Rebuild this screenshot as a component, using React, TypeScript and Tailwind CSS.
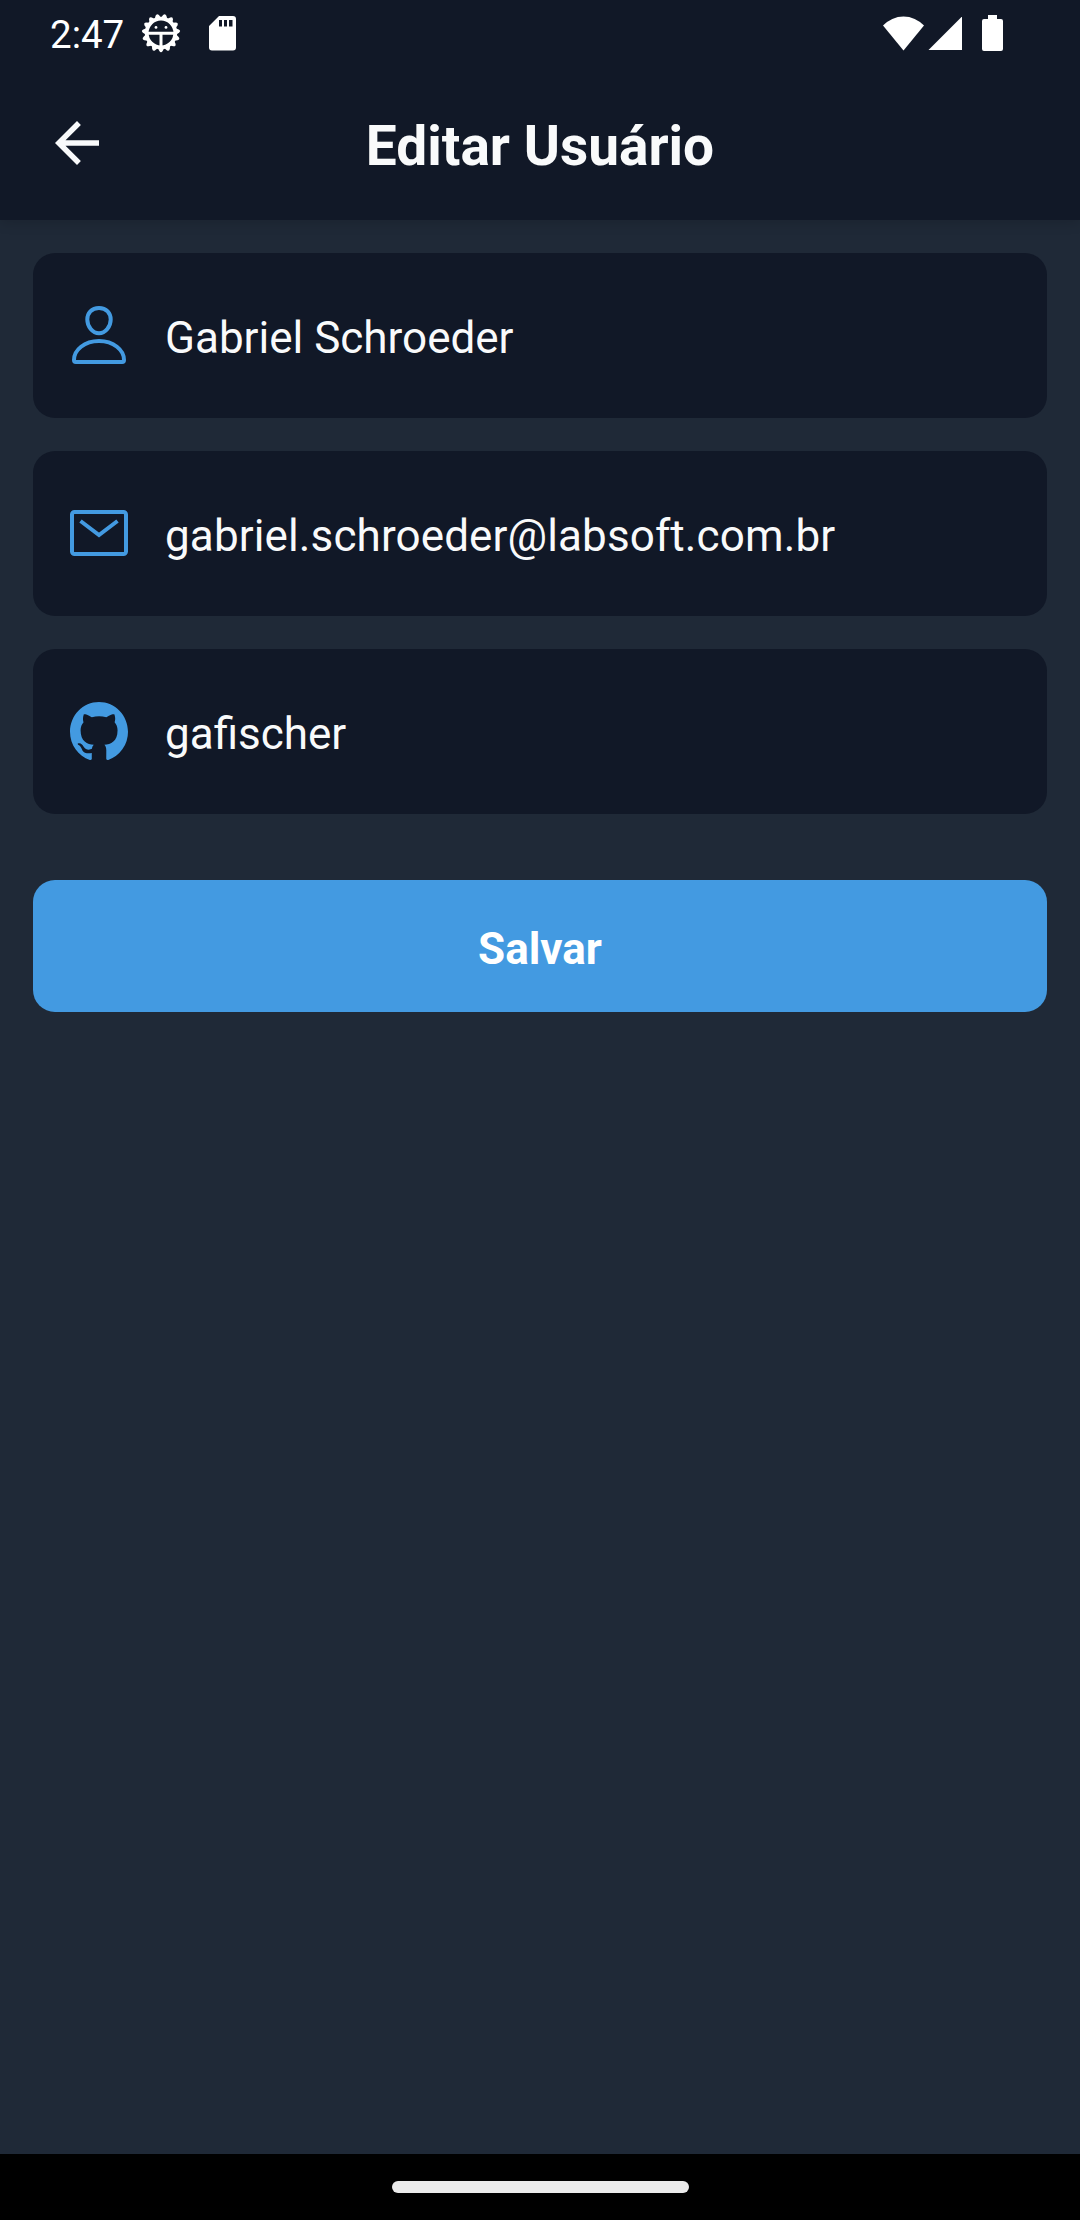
import React from "react";

const TEETH = Array.from({ length: 15 }, (_, i) => i * 24);

function GearIcon() {
  return (
    <svg className="ml-[17px] size-[40px]" viewBox="-20 -20 40 40">
      <circle r="14.3" fill="none" stroke="#fff" strokeWidth="3.8" />
      {TEETH.map((a) => (
        <path key={a} d="M-3.2 15 L-1.7 18 Q0 20.400 1.7 18 L3.2 15Z" fill="#fff" transform={`rotate(${a})`} />
      ))}
      <path d="M-13 .3H13M0 .3V14" stroke="#fff" strokeWidth="3" />
      <circle cx="-5" cy="-5.6" r="1.4" fill="#fff" />
      <circle cx="5" cy="-5.6" r="1.4" fill="#fff" />
    </svg>
  );
}

function SdCardIcon() {
  return (
    <svg className="ml-[28px] h-[35px] w-[27px]" viewBox="0 0 27 35" fill="#fff">
      <path fillRule="evenodd" d="M10 0H24Q27 0 27 3V31.500Q27 34.500 24 34.500H3Q0 34.500 0 31.500V10ZM10 4V10.500H13V4ZM15 4V10.500H18V4ZM20 4V10.500H23.500V4Z" />
    </svg>
  );
}

function StatusBar() {
  return (
    <div className="flex h-[66px] items-center pr-[77px] pl-[50px]">
      <span className="mt-[2px] text-[38.5px] leading-[45px] text-white">2:47</span>
      <GearIcon />
      <SdCardIcon />
      <div className="ml-auto flex items-center">
        <svg className="h-[35px] w-[41px]" viewBox="0 0 41 35" fill="#fff">
          <path d="M0 9.500A28 28 0 0 1 41 9.500L20.500 34.500Z" />
        </svg>
        <svg className="ml-[4px] size-[34.500px]" viewBox="0 0 34.500 34.500" fill="#fff">
          <path d="M34.500 0V34.500H0Z" />
        </svg>
        <svg className="ml-[20px] h-[36px] w-[21px]" viewBox="0 0 21 36" fill="#fff">
          <path d="M6 0H15V4H19Q21 4 21 6V34Q21 36 19 36H2Q0 36 0 34V6Q0 4 2 4H6Z" />
        </svg>
      </div>
    </div>
  );
}

function PersonIcon() {
  return (
    <svg className="size-[58px]" viewBox="0 0 58 58" fill="none" stroke="#439ae1" strokeWidth="4">
      <path d="M29 2C36.500 2 40.700 7.200 40.700 13.500C40.700 20.500 35.500 27.300 29 27.300S17.300 20.500 17.300 13.500C17.300 7.200 21.500 2 29 2Z" />
      <path d="M5.800 56C4.800 56 4 55.300 4 54C4 44 14.500 35.100 29 35.100S54 44 54 54C54 55.300 53.200 56 52.200 56Z" />
    </svg>
  );
}

function MailIcon() {
  return (
    <svg className="size-[58px]" viewBox="0 0 58 58" fill="none" stroke="#439ae1" strokeWidth="4">
      <rect x="2" y="8" width="54" height="42" rx="2.500" />
      <path d="M10.500 17L29 31L47.500 17" />
    </svg>
  );
}

function GithubIcon() {
  return (
    <svg className="size-[58px]" viewBox="0 0 16 15.600" preserveAspectRatio="none" fill="#439ae1">
      <path d="M8 0C3.58 0 0 3.58 0 8c0 3.54 2.29 6.53 5.47 7.59.4.07.55-.17.55-.38 0-.19-.01-.82-.01-1.49-2.01.37-2.53-.49-2.69-.94-.09-.23-.48-.94-.82-1.13-.28-.15-.68-.52-.01-.53.63-.01 1.08.58 1.23.82.72 1.21 1.87.87 2.33.66.07-.52.28-.87.51-1.07-1.78-.2-3.64-.89-3.64-3.95 0-.87.31-1.59.82-2.15-.08-.2-.36-1.02.08-2.12 0 0 .67-.21 2.2.82.64-.18 1.32-.27 2-.27s1.36.09 2 .27c1.53-1.04 2.2-.82 2.2-.82.44 1.1.16 1.92.08 2.12.51.56.82 1.27.82 2.15 0 3.07-1.87 3.75-3.65 3.95.29.25.54.73.54 1.48 0 1.07-.01 1.93-.01 2.2 0 .21.15.46.55.38A8.01 8.01 0 0 0 16 8c0-4.420-3.580-8-8-8Z" />
    </svg>
  );
}

function Field({ icon, value, wide = false }: { icon: React.ReactNode; value: string; wide?: boolean }) {
  return (
    <div className="flex h-[165px] items-center rounded-[22px] bg-[#111827] pl-[37px]">
      <div className="-mt-[1px]">{icon}</div>
      <span
        className={`mt-[5px] ml-[37px] text-[44px] leading-[52px] text-[#f9fafb] ${wide ? "tracking-[0.12px]" : ""}`}
      >
        {value}
      </span>
    </div>
  );
}

export default function App() {
  return (
    <div className="flex h-[2220px] w-[1080px] flex-col bg-[#1f2937] font-['Roboto',sans-serif]">
      <header className="h-[220px] bg-[#111827] shadow-[0_3px_12px_rgba(0,0,0,0.14)]">
        <StatusBar />
        <div className="grid h-[154px] grid-cols-[1fr_auto_1fr] items-center">
          <svg className="ml-[55px] size-[44px]" viewBox="0 0 16 16" fill="#f9fafb">
            <path d="M16 7H3.830L9.420 1.410L8 0L0 8L8 16L9.410 14.590L3.830 9H16Z" />
          </svg>
          <h1 className="mt-[6px] text-[55px] leading-[64px] font-bold text-[#f9fafb]">Editar Usuário</h1>
        </div>
      </header>
      <main className="flex grow flex-col gap-[33px] px-[33px] pt-[33px]">
        <Field icon={<PersonIcon />} value="Gabriel Schroeder" />
        <Field icon={<MailIcon />} value="gabriel.schroeder@labsoft.com.br" wide />
        <Field icon={<GithubIcon />} value="gafischer" />
        <button className="mt-[33px] flex h-[132px] items-center justify-center rounded-[22px] bg-[#439ae1] pt-[5px] text-[44px] leading-[52px] font-bold text-white">
          Salvar
        </button>
      </main>
      <footer className="flex h-[66px] justify-center bg-black pt-[27px]">
        <div className="h-[12px] w-[297px] rounded-full bg-[#ebebeb]" />
      </footer>
    </div>
  );
}
